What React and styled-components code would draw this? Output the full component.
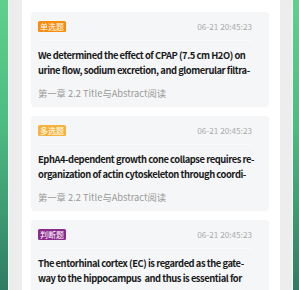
import React from 'react';
import styled, { createGlobalStyle } from 'styled-components';

const GlobalStyle = createGlobalStyle`
  html, body {
    margin: 0;
    padding: 0;
    height: 290px;
    overflow: hidden;
  }
  body {
    background: linear-gradient(180deg, #5fd08c 0%, #4dba80 45%, #2f7c64 100%);
    font-family: "Noto Sans CJK SC", "Noto Sans", sans-serif;
  }
`;

const Phone = styled.div`
  height: 290px;
  margin: 0 6px 0 8px;
  border-left: 1px solid #f6f8f6;
  border-right: 1px solid #f6f8f6;
  background: linear-gradient(90deg, #ececec 0%, #f3f3f3 30%, #f3f3f3 70%, #ededed 100%);
  padding: 0 12px 0 13px;
  display: flex;
`;

const Screen = styled.div`
  flex: 1;
  background: #fff;
  padding: 12px 11px 0 9px;
  display: flex;
  flex-direction: column;
  gap: 9px;
  overflow: hidden;
`;

const Card = styled.div`
  background: #f5f6f7;
  border-radius: 4px;
  padding: 0 17px 7px 7px;
  flex-shrink: 0;
`;

const Header = styled.div`
  height: 28px;
  display: flex;
  align-items: center;
  justify-content: space-between;
  border-bottom: 1px solid #fafafb;
`;

const Badge = styled.span`
  font-size: 8px;
  line-height: 11px;
  height: 11px;
  padding: 0 2px;
  border-radius: 1.5px;
  color: #fff;
  background: ${p => p.color};
`;

const Time = styled.span`
  font-size: 8.2px;
  color: #ababab;
`;

const Title = styled.div`
  margin-top: 7px;
  font-size: 9.4px;
  font-weight: 700;
  line-height: 14.5px;
  letter-spacing: -0.46px;
  color: #1a1a1a;
`;

const TitleLine = styled.div`
  white-space: pre;
`;

const Chapter = styled.div`
  margin-top: 9px;
  font-size: 9.3px;
  line-height: 14px;
  color: #9a9a9a;
  white-space: nowrap;
`;

const items = [
  {
    type: '单选题',
    color: '#f98c0c',
    lines: [
      'We determined the effect of CPAP (7.5 cm H2O) on',
      'urine flow, sodium excretion, and glomerular filtra-',
    ],
  },
  {
    type: '多选题',
    color: '#f6b33b',
    lines: [
      'EphA4-dependent growth cone collapse requires re-',
      'organization of actin cytoskeleton through coordi-',
    ],
  },
  {
    type: '判断题',
    color: '#8a2a8c',
    lines: [
      'The entorhinal cortex (EC) is regarded as the gate-',
      'way to the hippocampus  and thus is essential for',
    ],
  },
];

export default function App() {
  return (
    <>
      <GlobalStyle />
      <Phone>
        <Screen>
          {items.map(item => (
            <Card key={item.type}>
              <Header>
                <Badge color={item.color}>{item.type}</Badge>
                <Time>06-21 20:45:23</Time>
              </Header>
              <Title>
                {item.lines.map(line => <TitleLine key={line}>{line}</TitleLine>)}
              </Title>
              <Chapter>第一章 2.2 Title与Abstract阅读</Chapter>
            </Card>
          ))}
        </Screen>
      </Phone>
    </>
  );
}
